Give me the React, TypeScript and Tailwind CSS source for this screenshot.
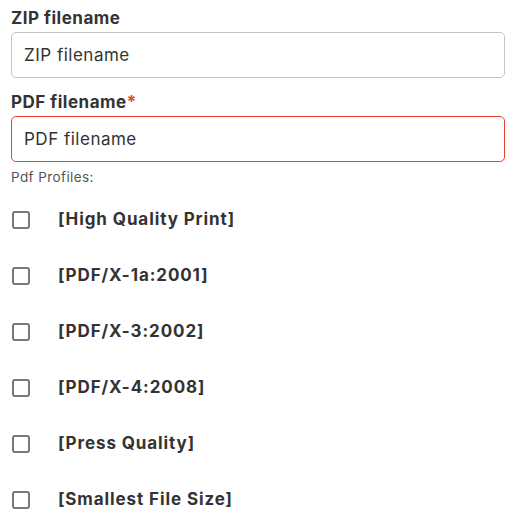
import { useState } from "react";

const profiles = [
  "[High Quality Print]",
  "[PDF/X-1a:2001]",
  "[PDF/X-3:2002]",
  "[PDF/X-4:2008]",
  "[Press Quality]",
  "[Smallest File Size]",
];

export default function App() {
  const [checked, setChecked] = useState<Record<string, boolean>>({});

  return (
    <div className="w-[520px] h-[532px] bg-white pl-[11px] pr-[15px] pt-[7px] text-[#333] font-['Inter',sans-serif]">
      <label className="block text-[17px] font-bold leading-[22px] tracking-[0.5px]">ZIP filename</label>
      <input
        placeholder="ZIP filename"
        className="mt-[3px] block h-[46px] w-full rounded-[5px] border border-[#c4c4c4] px-[12px] text-[17px] tracking-[0.5px] text-[#333] placeholder:text-[#333] outline-none"
      />
      <label className="mt-[13px] block text-[17px] font-bold leading-[22px] tracking-[0.5px]">
        PDF filename<span className="text-[#e8412c]">*</span>
      </label>
      <input
        placeholder="PDF filename"
        className="mt-[3px] block h-[46px] w-full rounded-[5px] border border-[#e8412c] px-[12px] text-[17px] tracking-[0.5px] text-[#333] placeholder:text-[#333] outline-none"
      />
      <p className="mt-[6px] text-[13.5px] leading-[18px] tracking-[0.4px] text-[#555]">Pdf Profiles:</p>
      <ul className="mt-[6px] flex flex-col">
        {profiles.map((p) => (
          <li key={p} className="flex h-[56px] items-center">
            <button
              type="button"
              onClick={() => setChecked({ ...checked, [p]: !checked[p] })}
              className="ml-[1px] h-[18px] w-[18px] rounded-[3px] border-2 border-[#777] bg-white"
            />
            <span className="ml-[28px] text-[17px] font-bold tracking-[0.9px] text-[#333]">{p}</span>
          </li>
        ))}
      </ul>
    </div>
  );
}
